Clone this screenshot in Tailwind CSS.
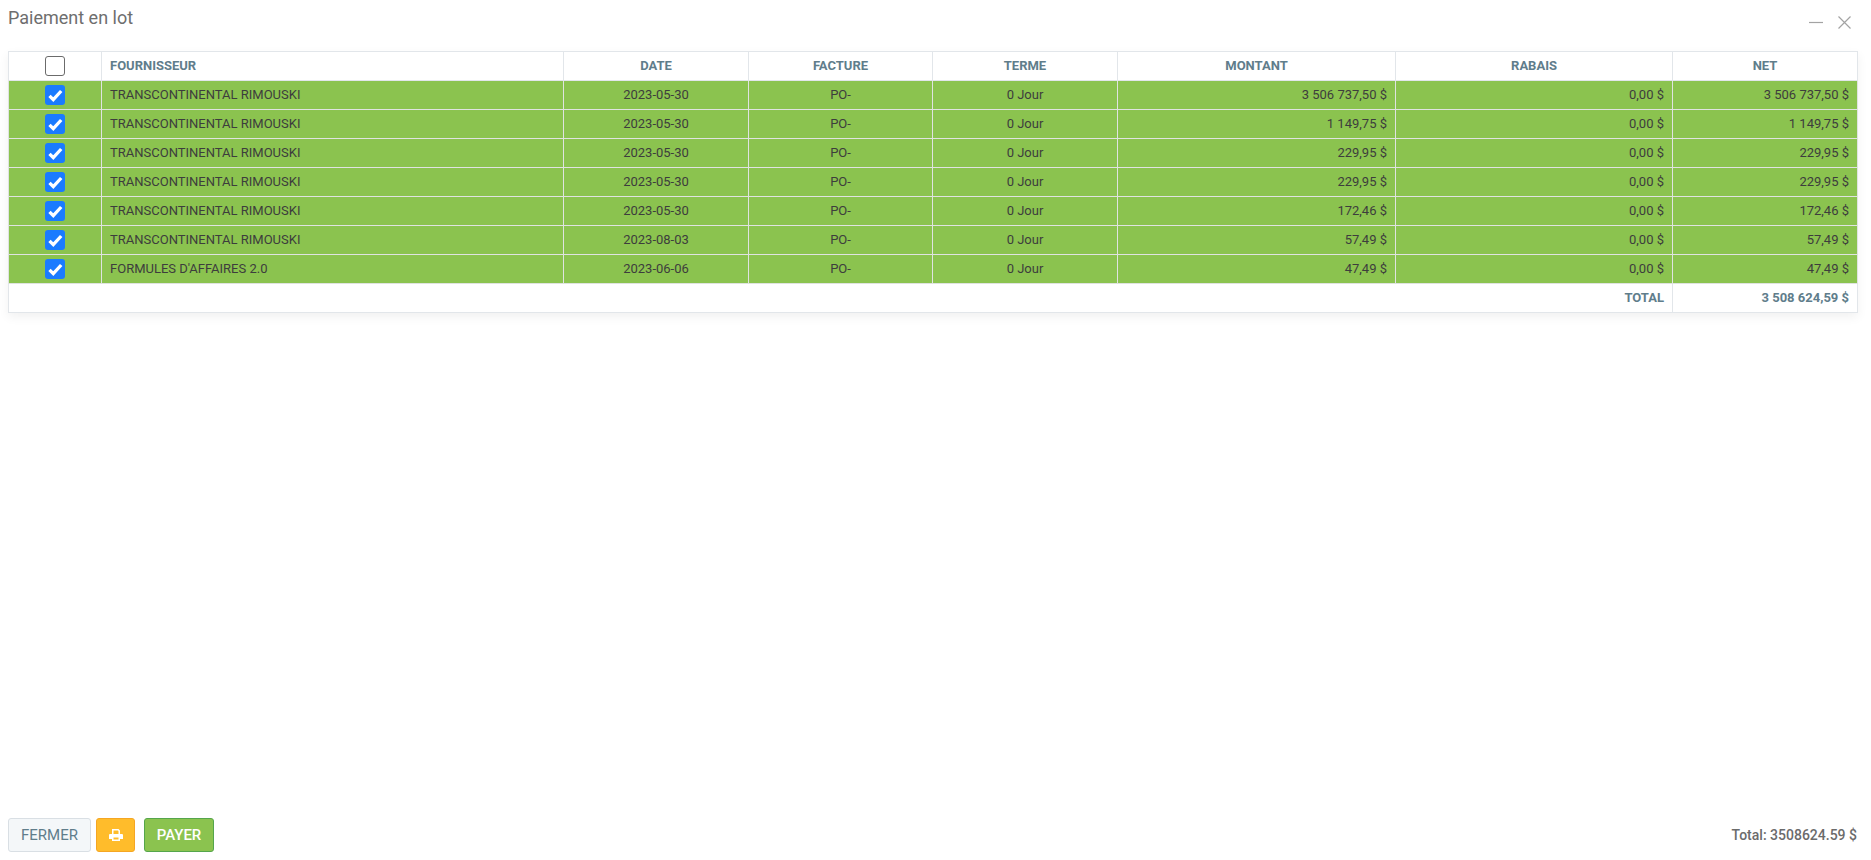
<!DOCTYPE html>
<html lang="fr">
<head>
    <meta charset="UTF-8">
    <title>Paiement en lot</title>
    <script src="https://cdn.jsdelivr.net/npm/@tailwindcss/browser@4"></script>
</head>
<body class="bg-white font-['Roboto',sans-serif]">
    <div class="h-[860px] flex flex-col px-2 overflow-hidden">
        <!-- title bar -->
        <div class="h-[51px] flex justify-between shrink-0">
            <h1 class="text-[18px] leading-[21px] pt-[7px] text-[#6e6e6e] font-normal">Paiement en lot</h1>
            <div class="flex gap-[15px] pt-4 pr-[6px] mr-[6px] h-fit">
                <svg width="14" height="13" viewBox="0 0 14 13" class="block"><path d="M0 6.5H14" stroke="#a3a3a3" stroke-width="1.2"/></svg>
                <svg width="13" height="13" viewBox="0 0 13 13" class="block"><path d="M0.5 0.5L12.5 12.5M12.5 0.5L0.5 12.5" stroke="#a3a3a3" stroke-width="1.2"/></svg>
            </div>
        </div>

        <!-- invoices -->
        <div class="w-[1850px] shadow-[0_4px_10px_rgba(0,0,0,0.06)]">
            <table class="w-[1849px] table-fixed border-collapse text-[13px] text-[#3d3d3d]">
                <colgroup>
                    <col class="w-[93px]"><col class="w-[462px]"><col class="w-[185px]"><col class="w-[184px]"><col class="w-[185px]"><col class="w-[278px]"><col class="w-[277px]"><col class="w-[185px]">
                </colgroup>
                <thead>
                    <tr class="h-[29px] text-[#607d8b] font-bold">
                        <th class="border border-[#e2e6ea] p-0"><span class="block w-5 h-5 mx-auto border border-[#6b6b6b] rounded-[3px] bg-white"></span></th>
                        <th class="border border-[#e2e6ea] px-2 text-left font-bold">FOURNISSEUR</th>
                        <th class="border border-[#e2e6ea] px-2 text-center font-bold">DATE</th>
                        <th class="border border-[#e2e6ea] px-2 text-center font-bold">FACTURE</th>
                        <th class="border border-[#e2e6ea] px-2 text-center font-bold">TERME</th>
                        <th class="border border-[#e2e6ea] px-2 text-center font-bold">MONTANT</th>
                        <th class="border border-[#e2e6ea] px-2 text-center font-bold">RABAIS</th>
                        <th class="border border-[#e2e6ea] px-2 text-center font-bold">NET</th>
                    </tr>
                </thead>
                <tbody id="rows">
                    <tr class="h-[29px] bg-[#8bc34f]">
                        <td class="border border-[#dfe3e0] p-0"><span class="flex items-center justify-center w-5 h-5 mx-auto rounded-[3px] bg-[#1a7bff]"><svg width="15" height="13" viewBox="0 0 15 13"><path d="M1.5 6.8L5.3 10.6L13.2 2" fill="none" stroke="#fff" stroke-width="3.3"/></svg></span></td>
                        <td class="border border-[#dfe3e0] px-2">TRANSCONTINENTAL RIMOUSKI</td>
                        <td class="border border-[#dfe3e0] px-2 text-center">2023-05-30</td>
                        <td class="border border-[#dfe3e0] px-2 text-center">PO-</td>
                        <td class="border border-[#dfe3e0] px-2 text-center">0 Jour</td>
                        <td class="border border-[#dfe3e0] px-2 text-right">3 506 737,50 $</td>
                        <td class="border border-[#dfe3e0] px-2 text-right">0,00 $</td>
                        <td class="border border-[#dfe3e0] px-2 text-right">3 506 737,50 $</td>
                    </tr>
                    <tr class="h-[29px] bg-[#8bc34f]">
                        <td class="border border-[#dfe3e0] p-0"><span class="flex items-center justify-center w-5 h-5 mx-auto rounded-[3px] bg-[#1a7bff]"><svg width="15" height="13" viewBox="0 0 15 13"><path d="M1.5 6.8L5.3 10.6L13.2 2" fill="none" stroke="#fff" stroke-width="3.3"/></svg></span></td>
                        <td class="border border-[#dfe3e0] px-2">TRANSCONTINENTAL RIMOUSKI</td>
                        <td class="border border-[#dfe3e0] px-2 text-center">2023-05-30</td>
                        <td class="border border-[#dfe3e0] px-2 text-center">PO-</td>
                        <td class="border border-[#dfe3e0] px-2 text-center">0 Jour</td>
                        <td class="border border-[#dfe3e0] px-2 text-right">1 149,75 $</td>
                        <td class="border border-[#dfe3e0] px-2 text-right">0,00 $</td>
                        <td class="border border-[#dfe3e0] px-2 text-right">1 149,75 $</td>
                    </tr>
                    <tr class="h-[29px] bg-[#8bc34f]">
                        <td class="border border-[#dfe3e0] p-0"><span class="flex items-center justify-center w-5 h-5 mx-auto rounded-[3px] bg-[#1a7bff]"><svg width="15" height="13" viewBox="0 0 15 13"><path d="M1.5 6.8L5.3 10.6L13.2 2" fill="none" stroke="#fff" stroke-width="3.3"/></svg></span></td>
                        <td class="border border-[#dfe3e0] px-2">TRANSCONTINENTAL RIMOUSKI</td>
                        <td class="border border-[#dfe3e0] px-2 text-center">2023-05-30</td>
                        <td class="border border-[#dfe3e0] px-2 text-center">PO-</td>
                        <td class="border border-[#dfe3e0] px-2 text-center">0 Jour</td>
                        <td class="border border-[#dfe3e0] px-2 text-right">229,95 $</td>
                        <td class="border border-[#dfe3e0] px-2 text-right">0,00 $</td>
                        <td class="border border-[#dfe3e0] px-2 text-right">229,95 $</td>
                    </tr>
                    <tr class="h-[29px] bg-[#8bc34f]">
                        <td class="border border-[#dfe3e0] p-0"><span class="flex items-center justify-center w-5 h-5 mx-auto rounded-[3px] bg-[#1a7bff]"><svg width="15" height="13" viewBox="0 0 15 13"><path d="M1.5 6.8L5.3 10.6L13.2 2" fill="none" stroke="#fff" stroke-width="3.3"/></svg></span></td>
                        <td class="border border-[#dfe3e0] px-2">TRANSCONTINENTAL RIMOUSKI</td>
                        <td class="border border-[#dfe3e0] px-2 text-center">2023-05-30</td>
                        <td class="border border-[#dfe3e0] px-2 text-center">PO-</td>
                        <td class="border border-[#dfe3e0] px-2 text-center">0 Jour</td>
                        <td class="border border-[#dfe3e0] px-2 text-right">229,95 $</td>
                        <td class="border border-[#dfe3e0] px-2 text-right">0,00 $</td>
                        <td class="border border-[#dfe3e0] px-2 text-right">229,95 $</td>
                    </tr>
                    <tr class="h-[29px] bg-[#8bc34f]">
                        <td class="border border-[#dfe3e0] p-0"><span class="flex items-center justify-center w-5 h-5 mx-auto rounded-[3px] bg-[#1a7bff]"><svg width="15" height="13" viewBox="0 0 15 13"><path d="M1.5 6.8L5.3 10.6L13.2 2" fill="none" stroke="#fff" stroke-width="3.3"/></svg></span></td>
                        <td class="border border-[#dfe3e0] px-2">TRANSCONTINENTAL RIMOUSKI</td>
                        <td class="border border-[#dfe3e0] px-2 text-center">2023-05-30</td>
                        <td class="border border-[#dfe3e0] px-2 text-center">PO-</td>
                        <td class="border border-[#dfe3e0] px-2 text-center">0 Jour</td>
                        <td class="border border-[#dfe3e0] px-2 text-right">172,46 $</td>
                        <td class="border border-[#dfe3e0] px-2 text-right">0,00 $</td>
                        <td class="border border-[#dfe3e0] px-2 text-right">172,46 $</td>
                    </tr>
                    <tr class="h-[29px] bg-[#8bc34f]">
                        <td class="border border-[#dfe3e0] p-0"><span class="flex items-center justify-center w-5 h-5 mx-auto rounded-[3px] bg-[#1a7bff]"><svg width="15" height="13" viewBox="0 0 15 13"><path d="M1.5 6.8L5.3 10.6L13.2 2" fill="none" stroke="#fff" stroke-width="3.3"/></svg></span></td>
                        <td class="border border-[#dfe3e0] px-2">TRANSCONTINENTAL RIMOUSKI</td>
                        <td class="border border-[#dfe3e0] px-2 text-center">2023-08-03</td>
                        <td class="border border-[#dfe3e0] px-2 text-center">PO-</td>
                        <td class="border border-[#dfe3e0] px-2 text-center">0 Jour</td>
                        <td class="border border-[#dfe3e0] px-2 text-right">57,49 $</td>
                        <td class="border border-[#dfe3e0] px-2 text-right">0,00 $</td>
                        <td class="border border-[#dfe3e0] px-2 text-right">57,49 $</td>
                    </tr>
                    <tr class="h-[29px] bg-[#8bc34f]">
                        <td class="border border-[#dfe3e0] p-0"><span class="flex items-center justify-center w-5 h-5 mx-auto rounded-[3px] bg-[#1a7bff]"><svg width="15" height="13" viewBox="0 0 15 13"><path d="M1.5 6.8L5.3 10.6L13.2 2" fill="none" stroke="#fff" stroke-width="3.3"/></svg></span></td>
                        <td class="border border-[#dfe3e0] px-2">FORMULES D'AFFAIRES 2.0</td>
                        <td class="border border-[#dfe3e0] px-2 text-center">2023-06-06</td>
                        <td class="border border-[#dfe3e0] px-2 text-center">PO-</td>
                        <td class="border border-[#dfe3e0] px-2 text-center">0 Jour</td>
                        <td class="border border-[#dfe3e0] px-2 text-right">47,49 $</td>
                        <td class="border border-[#dfe3e0] px-2 text-right">0,00 $</td>
                        <td class="border border-[#dfe3e0] px-2 text-right">47,49 $</td>
                    </tr>
                </tbody>
                <tfoot>
                    <tr class="h-[29px] text-[#607d8b] font-bold">
                        <td colspan="7" class="border border-[#e2e6ea] px-2 text-right">TOTAL</td>
                        <td class="border border-[#e2e6ea] px-2 text-right">3 508 624,59 $</td>
                    </tr>
                </tfoot>
            </table>
        </div>

        <!-- actions -->
        <div class="mt-auto mb-2 flex justify-between items-center">
            <div class="flex items-center">
                <button class="w-[83px] h-[34px] border border-[#d9dfe4] rounded-[3px] bg-[#f4f7f9] text-[15px] text-[#607d8b]">FERMER</button>
                <button class="ml-[5px] w-[39px] h-[34px] flex items-center justify-center border border-[#f5a623] rounded-[3px] bg-[#ffbc2b]">
                    <svg width="14" height="12" viewBox="0 0 14 12"><path fill="#fff" d="M3 0h6.5L11 1.5V5h2a1 1 0 0 1 1 1v4h-3v2H3v-2H0V6a1 1 0 0 1 1-1h2zM4.5 1.5V5h5V2.2L9 1.5zM4.5 8.5v2h5v-2z" fill-rule="evenodd"/></svg>
                </button>
                <button class="ml-[9px] w-[70px] h-[34px] border border-[#55a64b] rounded-[3px] bg-[#8bc34f] text-[15px] font-medium text-white">PAYER</button>
            </div>
            <span class="text-[14px] font-medium text-[#6b6b6b] mr-[6px]">Total: 3508624.59 $</span>
        </div>
    </div>
</body>
</html>
